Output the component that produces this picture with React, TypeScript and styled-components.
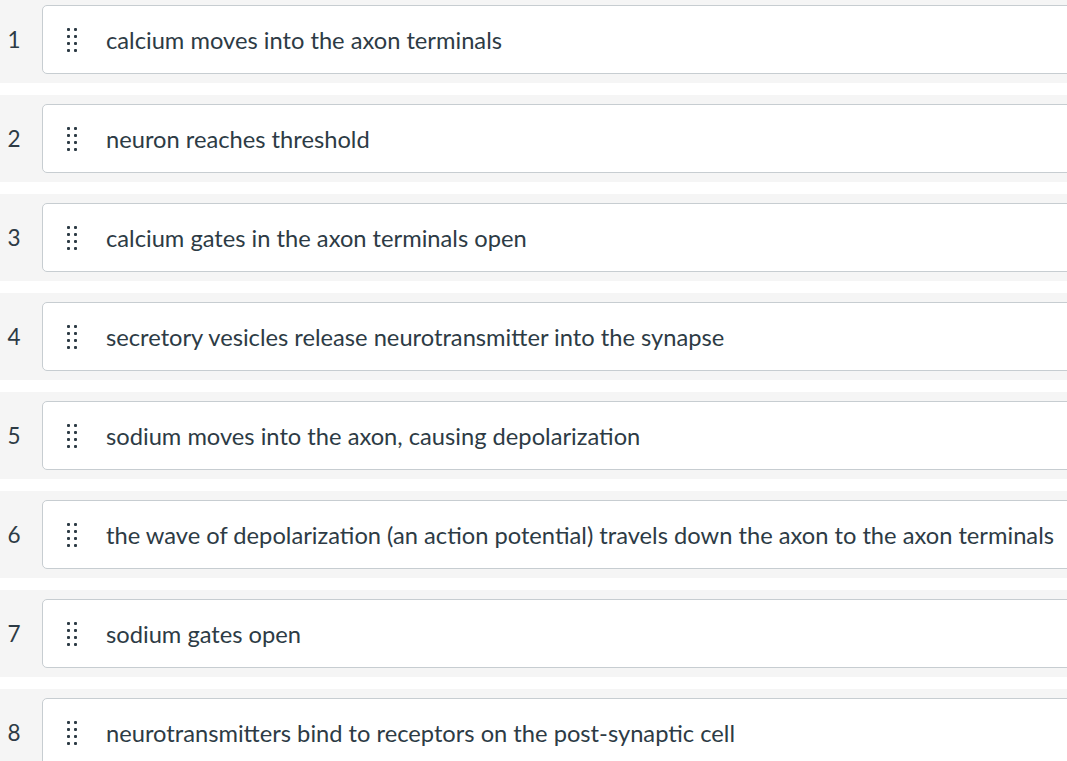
import React from 'react';
import styled, { createGlobalStyle } from 'styled-components';

const GlobalStyle = createGlobalStyle`
  body {
    margin: 0;
    background: #ffffff;
    font-family: Lato, 'Noto Sans', sans-serif;
    color: #2d3b45;
    overflow: hidden;
  }
`;

const List = styled.ol`
  list-style: none;
  margin: -4px 0 0 0;
  padding: 0;
  display: flex;
  flex-direction: column;
  gap: 12px;
`;

const Row = styled.li`
  display: flex;
  align-items: center;
  background: #f5f5f5;
  padding: 9px 0;
`;

const Index = styled.span`
  width: 28px;
  margin-right: 14px;
  text-align: center;
  font-size: 22.5px;
  color: #2d3b45;
  flex-shrink: 0;
`;

const Card = styled.div`
  flex: 1;
  display: flex;
  align-items: center;
  height: 69px;
  box-sizing: border-box;
  margin-right: -12px;
  background: #ffffff;
  border: 1px solid #c7cdd1;
  border-radius: 5px;
  padding-left: 24px;
`;

const Handle = styled.span`
  display: grid;
  grid-template-columns: repeat(2, 3px);
  grid-auto-rows: 3px;
  column-gap: 4px;
  row-gap: 4px;
  width: 10px;
  margin-right: 29px;

  i {
    display: block;
    width: 3px;
    height: 3px;
    border-radius: 1px;
    background: #2d3b45;
  }
`;

const Label = styled.span`
  font-size: 23.7px;
  white-space: nowrap;
  color: #2d3b45;
`;

const steps = [
  'calcium moves into the axon terminals',
  'neuron reaches threshold',
  'calcium gates in the axon terminals open',
  'secretory vesicles release neurotransmitter into the synapse',
  'sodium moves into the axon, causing depolarization',
  'the wave of depolarization (an action potential) travels down the axon to the axon terminals',
  'sodium gates open',
  'neurotransmitters bind to receptors on the post-synaptic cell',
];

const DragHandle = () => (
  <Handle aria-hidden>
    {Array.from({ length: 8 }).map((_, i) => (
      <i key={i} />
    ))}
  </Handle>
);

export default function App() {
  return (
    <>
      <GlobalStyle />
      <List>
        {steps.map((text, i) => (
          <Row key={i}>
            <Index>{i + 1}</Index>
            <Card>
              <DragHandle />
              <Label>{text}</Label>
            </Card>
          </Row>
        ))}
      </List>
    </>
  );
}
